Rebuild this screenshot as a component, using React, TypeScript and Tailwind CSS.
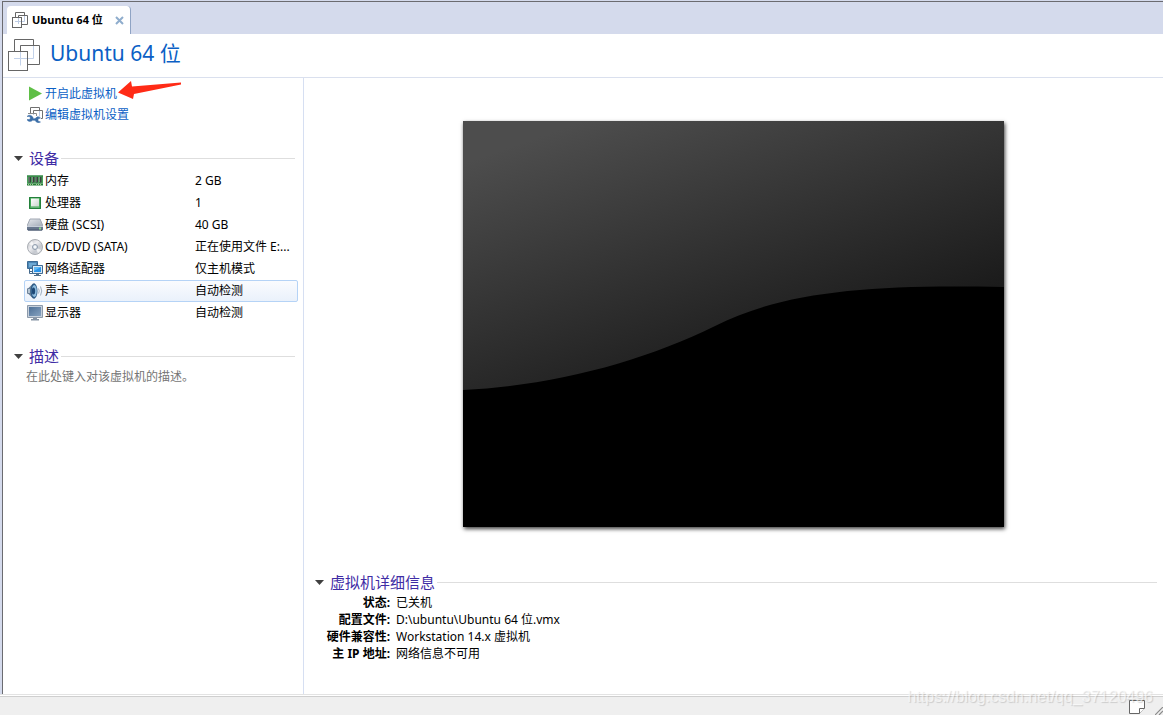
import { useState, type ReactNode } from 'react';

interface Device {
  id: string;
  name: string;
  value: string;
  icon: ReactNode;
}

function MachineIcon({ className }: { className?: string }) {
  return (
    <svg className={className} viewBox="0 0 32 32" fill="none">
      <path d="M12.500 12V6.500M12.500 13v6.500M6 19.500h6.500v7M19 19.500h-6.500M20 19.500h5.500V7M12.500 12v-5.500" stroke="#c3d2ea" />
      <path d="M6.500 12V.5h19V6M12.500 12V6.500h19v19H20" stroke="#666" />
      <rect x="0.5" y="12.5" width="19" height="19" stroke="#666" />
    </svg>
  );
}

function SmallMachineIcon() {
  return (
    <svg className="h-4 w-4 shrink-0" viewBox="0 0 16 16" fill="none">
      <path d="M6.500 6v6M3 9.500h6M10 9.500h2.500V4" stroke="#bccbe4" />
      <path d="M3.500 5V.5h9V3M6.500 5V3.500h9v9H10" stroke="#666" />
      <rect x="0.5" y="5.5" width="9" height="10" stroke="#666" />
    </svg>
  );
}

function PlayIcon() {
  return (
    <svg className="h-4 w-4 shrink-0" viewBox="0 0 16 16">
      <path d="M2 .5 15 7.500 2 14.500z" fill="#5fbf46" />
    </svg>
  );
}

function SettingsIcon() {
  return (
    <svg className="h-4 w-4 shrink-0" viewBox="0 0 16 16" fill="none">
      <path d="M6.500 8V4M12.500 4v5.500H10" stroke="#bccbe4" />
      <path d="M3.500 6V.5h9V3M6.500 6V3.500h9v8H14" stroke="#707070" />
      <path d="M1 6.500h8.500V9" stroke="#8b8b8b" />
      <path
        d="M0 9.500h2.500l1 1.500-1 1.500H0c1 2.500 4 2.500 5.500.8h2.500c1 2.200 3.500 3 5.500 1.700L11 14v-2l2.500-1c-2-1.500-4.500-1-5.500.7H6.300C6 8.500 2 7 0 9.500z"
        fill="#3c6fa8"
        stroke="#3c6fa8"
        strokeWidth="0.5"
      />
    </svg>
  );
}

function MemoryIcon() {
  return (
    <svg className="h-4 w-4 shrink-0" viewBox="0 0 16 16">
      <path d="M0 2.500h16v8H0z" fill="#48a35a" />
      <path d="M0 3h16" stroke="#2c7a3c" />
      <path d="M0 10.500h16v2H0z" fill="#257c39" />
      <path d="M1.500 4H4v5.500H1.500zM5 4h2.500v5.500H5zM8.500 4H11v5.500H8.500zM12 4h2.500v5.500H12z" fill="#37423c" />
      <path d="M2 4v5M5.500 4v5M9 4v5M12.500 4v5" stroke="#7d8a82" />
      <path d="M1 11.500h6M9 11.500h6" stroke="#a5cf8e" strokeDasharray="1 1" />
    </svg>
  );
}

function CpuIcon() {
  return (
    <svg className="h-4 w-4 shrink-0" viewBox="0 0 16 16">
      <defs>
        <linearGradient id="cpu" x1="0" y1="0" x2="1" y2="1">
          <stop offset="0" stopColor="#fff" />
          <stop offset="1" stopColor="#c9d5cc" />
        </linearGradient>
      </defs>
      <path d="M2 2h12v12H2z" fill="#43ab58" />
      <path d="M2.500 2.500h11v11h-11z" fill="none" stroke="#23803a" />
      <path d="M4 3.500h8v8H4z" fill="url(#cpu)" />
      <path d="M4 12h8" stroke="#86bf91" />
    </svg>
  );
}

function DiskIcon() {
  return (
    <svg className="h-4 w-4 shrink-0" viewBox="0 0 16 16">
      <defs>
        <linearGradient id="disk" x1="0" y1="0" x2="1" y2="1">
          <stop offset="0" stopColor="#e6e9ed" />
          <stop offset="1" stopColor="#a3abb8" />
        </linearGradient>
      </defs>
      <path d="M3 2h10l3 7H0z" fill="url(#disk)" />
      <path d="M0 9 3 2h10l3 7" fill="none" stroke="#a0a7b2" />
      <path d="M0 9h16v3.500l-1 1H1l-1-1z" fill="#68778d" />
      <path d="M0 9.500h16" stroke="#c6cdd8" />
      <path d="M1 13h14" stroke="#46546a" />
      <path d="M12 10.500h2v2h-2z" fill="#8ed98a" />
    </svg>
  );
}

function DiscIcon() {
  return (
    <svg className="h-4 w-4 shrink-0" viewBox="0 0 16 16">
      <defs>
        <linearGradient id="disc" x1="0" y1="0" x2="1" y2="1">
          <stop offset="0" stopColor="#b7babf" />
          <stop offset=".4" stopColor="#ededf0" />
          <stop offset=".65" stopColor="#c4c8cf" />
          <stop offset="1" stopColor="#dedfe2" />
        </linearGradient>
      </defs>
      <circle cx="8" cy="8" r="7.500" fill="url(#disc)" stroke="#aaaeb4" />
      <path d="M8 8 2 5l3-3zM8 8l6 3-3 3z" fill="#fff" opacity=".7" />
      <circle cx="8" cy="8" r="2.500" fill="#dfe6ee" stroke="#8f9bab" />
      <circle cx="8" cy="8" r="1" fill="#fff" />
    </svg>
  );
}

function NetworkIcon() {
  return (
    <svg className="h-4 w-4 shrink-0" viewBox="0 0 16 16">
      <path d="M.5.5h10v7H.5z" fill="#4b86b6" stroke="#3b6a94" />
      <path d="M2 2h7v4H2z" fill="#6ea9d3" />
      <path d="M2.500 8v4.500H6M2 10.500h3" fill="none" stroke="#44698c" />
      <path d="M5.500 4.500h10v8h-10z" fill="#d9e8f4" stroke="#3e6a92" />
      <path d="M7 6h7v5H7z" fill="#2a94ea" />
      <path d="M7 6h7L7 10z" fill="#62bbf5" />
      <path d="M9 13h3v1h2v1H7v-1h2z" fill="#54708a" />
    </svg>
  );
}

function SoundIcon() {
  return (
    <svg className="h-4 w-4 shrink-0" viewBox="0 0 16 16">
      <path d="M0 6.500C0 5.500.5 5 1.500 5L6 .5h2v15H6L1.500 11C.5 11 0 10.500 0 9.500z" fill="#6c8299" />
      <path d="M1 6h2v4H1z" fill="#b6c5d3" />
      <ellipse cx="7" cy="8" rx="3.500" ry="7.500" fill="#2d5b88" />
      <ellipse cx="7.300" cy="8" rx="2.500" ry="6" fill="#8fbddf" />
      <ellipse cx="6.500" cy="8" rx="1.700" ry="3.500" fill="#1d4877" />
      <path d="M11.500 5.500q1.500 2.500 0 5M13.500 3.500q2.500 4.500 0 9" fill="none" stroke="#a0b0c2" />
    </svg>
  );
}

function DisplayIcon() {
  return (
    <svg className="h-4 w-4 shrink-0" viewBox="0 0 16 16">
      <defs>
        <linearGradient id="display" x1="0" y1="0" x2="1" y2="1">
          <stop offset="0" stopColor="#4d6f96" />
          <stop offset="1" stopColor="#86a2c0" />
        </linearGradient>
      </defs>
      <path d="M.5.5h15v12H.5z" fill="#c6d0dc" stroke="#8d9aaa" />
      <path d="M2 2h12v9H2z" fill="url(#display)" />
      <path d="M6 13h4v1h2v1.500H4V14h2z" fill="#8593a4" />
    </svg>
  );
}

const DEVICES: Device[] = [
  { id: 'memory', name: '内存', value: '2 GB', icon: <MemoryIcon /> },
  { id: 'cpu', name: '处理器', value: '1', icon: <CpuIcon /> },
  { id: 'disk', name: '硬盘 (SCSI)', value: '40 GB', icon: <DiskIcon /> },
  { id: 'cd', name: 'CD/DVD (SATA)', value: '正在使用文件 E:...', icon: <DiscIcon /> },
  { id: 'network', name: '网络适配器', value: '仅主机模式', icon: <NetworkIcon /> },
  { id: 'sound', name: '声卡', value: '自动检测', icon: <SoundIcon /> },
  { id: 'display', name: '显示器', value: '自动检测', icon: <DisplayIcon /> },
];

const DETAILS = [
  { label: '状态:', value: '已关机' },
  { label: '配置文件:', value: 'D:\\ubuntu\\Ubuntu 64 位.vmx' },
  { label: '硬件兼容性:', value: 'Workstation 14.x 虚拟机' },
  { label: '主 IP 地址:', value: '网络信息不可用' },
];

function SectionHeader({ title, open, onToggle }: { title: string; open: boolean; onToggle: () => void }) {
  return (
    <h2 className="flex h-[22px] items-center">
      <button
        type="button"
        aria-expanded={open}
        onClick={onToggle}
        className="flex items-center gap-1.5 text-[15px] leading-[22px] text-[#3f2da5]"
      >
        <svg className={open ? 'h-[5px] w-[9px]' : 'h-[5px] w-[9px] -rotate-90'} viewBox="0 0 9 5">
          <path d="M0 0h9L4.500 5z" fill="#404040" />
        </svg>
        {title}
      </button>
      <span className="ml-0.5 h-px flex-1 bg-[#dedede]" />
    </h2>
  );
}

// Powered-off console preview
function ConsolePreview() {
  return (
    <svg
      className="block aspect-[541/406] w-[63%] bg-black shadow-[1px_2px_4px_rgba(0,0,0,0.75)]"
      viewBox="0 0 541 406"
      preserveAspectRatio="none"
    >
      <defs>
        <linearGradient id="gloss" gradientUnits="userSpaceOnUse" x1="13" y1="38" x2="110" y2="314">
          <stop offset="0" stopColor="#4d4d4d" />
          <stop offset="1" stopColor="#1b1b1b" />
        </linearGradient>
      </defs>
      <path d="M0 0H541V166C410 163 320 170 252 205C180 240 95 264 0 269Z" fill="url(#gloss)" />
    </svg>
  );
}

export default function App() {
  const [selected, setSelected] = useState('sound');
  const [devicesOpen, setDevicesOpen] = useState(true);
  const [notesOpen, setNotesOpen] = useState(true);
  const [detailsOpen, setDetailsOpen] = useState(true);

  return (
    <div className="relative flex min-h-screen flex-col bg-[#efefef] font-['Noto_Sans','Noto_Sans_CJK_SC',sans-serif] text-xs text-black">
      <div className="flex flex-1 flex-col border-b border-[#cfcfcf] bg-white pb-px">
        <div className="flex flex-1 flex-col border-b border-[#e3e3e3]">
          <div className="flex flex-1 border-t border-[#d4daec] bg-[#d4daec] pl-0.5">
            <div className="flex min-w-0 flex-1 flex-col border-t border-l border-[#6b6b70] bg-white">
              <div className="flex h-8 items-end bg-[#d4daec] pl-1">
                <div className="flex h-7 items-center rounded-t border-r border-[#8fa3c4] bg-white pr-1.5 pl-[5px]">
                  <SmallMachineIcon />
                  <span className="ml-1 text-[11px] leading-4 font-bold whitespace-nowrap">Ubuntu 64 位</span>
                  <button type="button" aria-label="关闭" className="ml-3">
                    <svg className="h-[9px] w-[9px]" viewBox="0 0 9 9">
                      <path d="M1 1l7 7M8 1 1 8" stroke="#8fadcd" strokeWidth="2" />
                    </svg>
                  </button>
                </div>
              </div>

              <header className="flex h-11 items-start gap-2.5 border-b border-[#dae0ee] pt-[5px] pl-[5px]">
                <MachineIcon className="h-8 w-8 shrink-0" />
                <h1 className="text-[21px] leading-7 text-[#0b5fc5]">Ubuntu 64 位</h1>
              </header>

              <div className="flex flex-1">
                <aside className="w-[301px] shrink-0 border-r border-[#d6dff2] pt-[5px] pr-[5px]">
                  <nav className="flex flex-col items-start pl-6 text-[#0b5fc5]">
                    <a href="#power-on" className="relative flex h-[21px] items-center gap-0.5">
                      <PlayIcon />
                      开启此虚拟机
                      <svg className="absolute top-0 left-full h-[21px] w-[64px]" viewBox="0 0 64 21" overflow="visible">
                        <path d="M1 9.500 14-2l1 5.500 49-4v2L17 11l-1 5z" fill="#ff2b16" />
                      </svg>
                    </a>
                    <a href="#settings" className="flex h-[21px] items-center gap-0.5">
                      <SettingsIcon />
                      编辑虚拟机设置
                    </a>
                  </nav>

                  <section className="mt-[22px]">
                    <div className="pr-[3px] pl-[11px]">
                      <SectionHeader title="设备" open={devicesOpen} onToggle={() => setDevicesOpen(!devicesOpen)} />
                    </div>
                    {devicesOpen && (
                      <ul className="mt-px pl-[21px]">
                        {DEVICES.map((device) => (
                          <li key={device.id}>
                            <button
                              type="button"
                              onClick={() => setSelected(device.id)}
                              className={`flex h-[22px] w-full items-center rounded-xs border px-0.5 text-left ${
                                selected === device.id
                                  ? 'border-[#b5d3f6] bg-linear-to-b from-[#fafbfe] to-[#eaf1fb]'
                                  : 'border-transparent'
                              }`}
                            >
                              <span className="flex w-[168px] shrink-0 items-center gap-0.5">
                                {device.icon}
                                {device.name}
                              </span>
                              <span className="whitespace-nowrap">{device.value}</span>
                            </button>
                          </li>
                        ))}
                      </ul>
                    )}
                  </section>

                  <section className="mt-[21px]">
                    <div className="pr-[3px] pl-[11px]">
                      <SectionHeader title="描述" open={notesOpen} onToggle={() => setNotesOpen(!notesOpen)} />
                    </div>
                    {notesOpen && (
                      <textarea
                        aria-label="描述"
                        rows={3}
                        placeholder="在此处键入对该虚拟机的描述。"
                        className="block w-full resize-none pl-[23px] leading-5 outline-none placeholder:text-[#757575]"
                      />
                    )}
                  </section>
                </aside>

                <main className="flex min-w-0 flex-1 flex-col pt-[43px] pb-8">
                  <div className="flex justify-center">
                    <ConsolePreview />
                  </div>
                  <section className="mt-11 pr-1.5 pl-[11px]">
                    <SectionHeader title="虚拟机详细信息" open={detailsOpen} onToggle={() => setDetailsOpen(!detailsOpen)} />
                    {detailsOpen && (
                      <dl className="mt-px">
                        {DETAILS.map((detail) => (
                          <div key={detail.label} className="flex gap-1.5 leading-[17px]">
                            <dt className="w-[75px] shrink-0 text-right font-bold">{detail.label}</dt>
                            <dd>{detail.value}</dd>
                          </div>
                        ))}
                      </dl>
                    )}
                  </section>
                </main>
              </div>
            </div>
          </div>
        </div>
      </div>

      <footer className="flex h-[18px] items-end justify-end gap-2.5">
        <button type="button" aria-label="消息" className="mb-px">
          <svg className="h-3.5 w-4" viewBox="0 0 16 14">
            <path d="M.5.5h15V8l-5 5.500H.5z" fill="#fff" stroke="#666" />
            <path d="M10.500 13.500V8.500h5" fill="#fff" stroke="#666" />
          </svg>
        </button>
        <svg className="h-2 w-2" viewBox="0 0 8 8">
          <path d="M0 8 8 0M4 8l4-4" stroke="#8a8a8a" strokeWidth="1.200" />
        </svg>
      </footer>

      <span className="pointer-events-none absolute right-2.5 bottom-2 font-['Liberation_Sans',sans-serif] text-base leading-5 text-white/60 [text-shadow:1px_1px_1px_rgba(0,0,0,0.15)]">
        https://blog.csdn.net/qq_37120496
      </span>
    </div>
  );
}
